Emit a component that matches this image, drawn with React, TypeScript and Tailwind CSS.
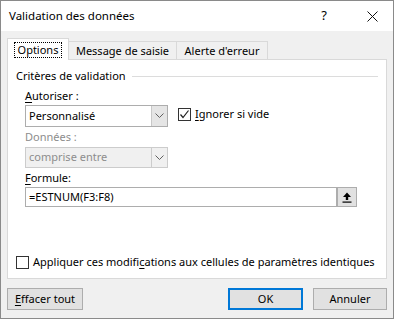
import React from "react";

const font = { fontFamily: '"Noto Sans", "Liberation Sans", sans-serif' };

function Chevron({ color = "#606060" }: { color?: string }) {
  return (
    <svg width="9" height="6" viewBox="0 0 9 6">
      <path d="M0.5 0.5 L4.5 4.5 L8.5 0.5" fill="none" stroke={color} strokeWidth="1" />
    </svg>
  );
}

function Check() {
  return (
    <svg width="11" height="11" viewBox="0 0 11 11">
      <path d="M1.5 5.5 L4 8.5 L9.5 1.5" fill="none" stroke="#202020" strokeWidth="1.2" />
    </svg>
  );
}

export default function App() {
  return (
    <div
      className="w-[394px] h-[319px] border border-[#8a8a8a] bg-[#f0f0f0] flex flex-col text-[11px] text-black overflow-hidden whitespace-nowrap"
      style={font}
    >
      {/* Title bar */}
      <div className="h-[30px] bg-white flex items-center shrink-0">
        <span className="pl-[8px] flex-1 leading-none text-[11.5px]">Validation des données</span>
        <span className="w-[20px] text-center text-[13px] mr-[33px]">?</span>
        <svg width="11" height="11" viewBox="0 0 11 11" className="mr-[15px]">
          <path d="M0.5 0.5 L10.5 10.5 M10.5 0.5 L0.5 10.5" stroke="#111" strokeWidth="1" />
        </svg>
      </div>

      {/* Body */}
      <div className="flex-1 flex flex-col px-[6px] pt-[7px]">
        {/* Tabs */}
        <div className="flex items-end h-[22px] relative z-10">
          <div className="w-[62px] h-[22px] bg-white border border-[#d9d9d9] border-b-0 flex items-center justify-center">
            <span className="border border-dotted border-black px-[3px] leading-[14px]">Options</span>
          </div>
          <div className="w-[108px] h-[19px] border border-[#d9d9d9] border-l-0 border-b-0 flex items-center justify-center">
            Message de saisie
          </div>
          <div className="w-[91px] h-[19px] border border-[#d9d9d9] border-l-0 border-b-0 flex items-center justify-center">
            Alerte d'erreur
          </div>
        </div>

        {/* Panel */}
        <div className="h-[220px] -mt-[1px] bg-white border border-[#d9d9d9] flex flex-col">
          <div className="flex items-center mt-[8px] h-[16px]">
            <span className="pl-[8px]">Critères de validation</span>
            <div className="flex-1 h-px bg-[#dcdcdc] ml-[6px] mr-[8px]" />
          </div>

          <div className="mt-[4px] pl-[17px] h-[16px] leading-[16px]">
            <u className="underline-offset-2">A</u>utoriser :
          </div>

          <div className="mt-[1px] pl-[17px] flex items-start">
            <div className="w-[143px] h-[22px] border border-[#adadad] flex">
              <div className="flex-1 flex items-center pl-[3px]">Personnalisé</div>
              <div className="w-[16px] bg-[#e5e5e5] border-l border-[#c8c8c8] flex items-center justify-center">
                <Chevron />
              </div>
            </div>
            <div className="ml-[10px] mt-[1px] flex items-center">
              <div className="w-[13px] h-[13px] border border-[#333] bg-white flex items-center justify-center">
                <Check />
              </div>
              <span className="ml-[4px]">
                <u className="underline-offset-2">I</u>gnorer si vide
              </span>
            </div>
          </div>

          <div className="mt-[2px] pl-[17px] h-[16px] leading-[16px] text-[#8d8d8d]">Données :</div>

          <div className="mt-[2px] pl-[17px]">
            <div className="w-[143px] h-[21px] border border-[#cccccc] bg-[#f0f0f0] flex text-[#8d8d8d]">
              <div className="flex-1 flex items-center pl-[3px]">comprise entre</div>
              <div className="w-[16px] border-l border-[#cccccc] flex items-center justify-center">
                <Chevron />
              </div>
            </div>
          </div>

          <div className="mt-[2px] pl-[17px] h-[16px] leading-[16px]">
            <u className="underline-offset-2">F</u>ormule:
          </div>

          <div className="mt-[1px] pl-[17px]">
            <div className="w-[332px] h-[20px] border border-[#adadad] flex">
              <div className="flex-1 flex items-center pl-[3px]">=ESTNUM(F3:F8)</div>
              <div className="w-[20px] h-[18px] bg-[#e1e1e1] border-l-2 border-[#adadad] flex items-center justify-center">
                <svg width="10" height="11" viewBox="0 0 10 11">
                  <path d="M5 0.5 L9 5 L6.2 5 L6.2 8 L3.8 8 L3.8 5 L1 5 Z" fill="#000" />
                  <rect x="0.5" y="9.5" width="9" height="1.2" fill="#000" />
                </svg>
              </div>
            </div>
          </div>

          <div className="mt-auto mb-[8px] pl-[8px] flex items-center h-[16px]">
            <div className="w-[13px] h-[13px] border border-[#333] bg-white" />
            <span className="ml-[4px]">
              Appliquer ces modifi<u className="underline-offset-2">c</u>ations aux cellules de paramètres identiques
            </span>
          </div>
        </div>

        {/* Buttons */}
        <div className="mt-[9px] flex h-[22px]">
          <div className="w-[76px] h-[22px] bg-[#e1e1e1] border border-[#adadad] flex items-center justify-center">
            <span>
              <u className="underline-offset-2">E</u>ffacer tout
            </span>
          </div>
          <div className="flex-1" />
          <div className="w-[75px] h-[22px] bg-[#e1e1e1] border-2 border-[#0078d7] flex items-center justify-center">
            OK
          </div>
          <div className="w-[74px] h-[22px] ml-[10px] bg-[#e1e1e1] border border-[#adadad] flex items-center justify-center">
            Annuler
          </div>
        </div>
      </div>
    </div>
  );
}
